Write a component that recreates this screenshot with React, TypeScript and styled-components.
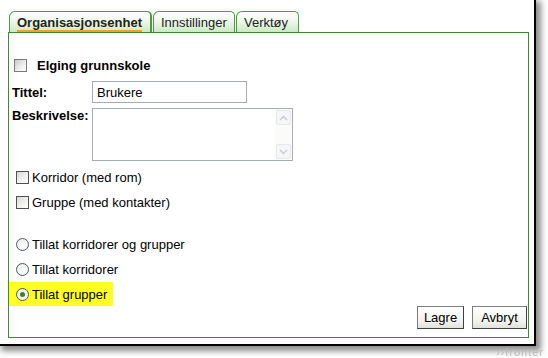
import React from 'react'
import styled, { createGlobalStyle } from 'styled-components'

const GlobalStyle = createGlobalStyle`
  html, body {
    margin: 0;
    padding: 0;
    background: #ffffff;
  }
  body {
    font-family: 'Liberation Sans', Arial, sans-serif;
    font-size: 13px;
    color: #000;
  }
`

const Stage = styled.div`
  position: relative;
  width: 548px;
  height: 358px;
  overflow: hidden;
  background: #fff;
`

const Frame = styled.div`
  width: 536px;
  height: 346px;
  padding: 11px 0 0 8px;
  box-sizing: border-box;
  border-right: 2px solid #000;
  border-bottom: 2px solid #000;
  box-shadow: 3px 3px 6px 2px rgba(0, 0, 0, 0.45);
  background: #fff;
  display: flex;
  flex-direction: column;
`

const TabBar = styled.div`
  display: flex;
  height: 21px;
  padding-left: 1px;
`

const Tab = styled.div<{ $active?: boolean; $w: number }>`
  width: ${(p) => p.$w}px;
  box-sizing: border-box;
  border: 1px solid #4c9a42;
  border-width: ${(p) => (p.$active ? '1px 2px 0 1px' : '1px 1px 0 1px')};
  border-radius: 6px 5px 0 0;
  margin-right: 1px;
  background: linear-gradient(#ffffff 0%, #eef8eb 45%, #cde9c5 100%);
  display: flex;
  align-items: center;
  padding-left: 7px;
  font-size: 13px;
  font-weight: ${(p) => (p.$active ? 'bold' : 'normal')};
  color: #222;
  white-space: nowrap;
  span {
    border-bottom: ${(p) => (p.$active ? '2px solid #f0a136' : 'none')};
    line-height: 15px;
    padding-top: ${(p) => (p.$active ? '2px' : '0')};
  }
`

const Panel = styled.div`
  width: 521px;
  height: 306px;
  box-sizing: border-box;
  border: 1px solid #3d8a36;
  display: flex;
  flex-direction: column;
`

const TitleRow = styled.label`
  display: flex;
  align-items: center;
  height: 20px;
  margin: 22px 0 0 5px;
  gap: 10px;
  font-weight: bold;
  font-size: 13px;
`

const FieldRow = styled.div<{ $top: number }>`
  display: flex;
  align-items: flex-start;
  margin-top: ${(p) => p.$top}px;
  padding-left: 3px;
`

const FieldLabel = styled.div<{ $h: number }>`
  width: 80px;
  font-weight: bold;
  font-size: 13px;
  line-height: 15px;
  display: flex;
  align-items: center;
  height: ${(p) => p.$h}px;
`

const TextInput = styled.div`
  width: 155px;
  height: 22px;
  box-sizing: border-box;
  border: 1px solid #a5acb5;
  display: flex;
  align-items: center;
  padding-left: 4px;
  font-size: 13px;
`

const TextArea = styled.div`
  width: 201px;
  height: 53px;
  box-sizing: border-box;
  border: 1px solid #a5acb5;
  display: flex;
  justify-content: flex-end;
`

const ScrollBar = styled.div`
  width: 17px;
  display: flex;
  flex-direction: column;
  justify-content: space-between;
  background: #fbfbfa;
`

const ScrollBtn = styled.div`
  width: 15px;
  height: 15px;
  margin: 1px;
  border: 1px solid #e6e8ea;
  border-radius: 2px;
  box-sizing: border-box;
  background: #f4f6f8;
  display: flex;
  align-items: center;
  justify-content: center;
`

const OptionGroup = styled.div<{ $top: number }>`
  display: flex;
  flex-direction: column;
  margin-top: ${(p) => p.$top}px;
  gap: 1px;
`

const OptionRow = styled.label<{ $hl?: boolean }>`
  display: flex;
  align-items: center;
  gap: 3px;
  height: 24px;
  width: ${(p) => (p.$hl ? '97px' : 'auto')};
  padding-left: 7px;
  background: ${(p) => (p.$hl ? '#ffff20' : 'transparent')};
  font-size: 13px;
`

const Box = styled.span<{ $big?: boolean }>`
  display: inline-block;
  width: 13px;
  height: 13px;
  box-sizing: border-box;
  border: 1px solid ${(p) => (p.$big ? '#7a7a7a' : '#4e5256')};
  background: ${(p) =>
    p.$big
      ? 'linear-gradient(135deg, #c9c9c9 0%, #ededed 55%, #ffffff 100%)'
      : 'linear-gradient(135deg, #d8d8d4 0%, #f3f3f1 60%, #ffffff 100%)'};
  flex-shrink: 0;
`

const Radio = styled.span<{ $on?: boolean }>`
  width: 13px;
  height: 13px;
  box-sizing: border-box;
  border-radius: 50%;
  border: 1px solid #4d5a66;
  background: radial-gradient(circle at 65% 65%, #ffffff 0%, #e6e6e2 100%);
  display: inline-flex;
  align-items: center;
  justify-content: center;
  flex-shrink: 0;
  &::after {
    content: '';
    display: ${(p) => (p.$on ? 'block' : 'none')};
    width: 5px;
    height: 5px;
    border-radius: 50%;
    background: #3d7d2c;
  }
`

const Footer = styled.div`
  margin-top: auto;
  display: flex;
  justify-content: flex-end;
  gap: 8px;
  padding: 0 1px 8px 0;
`

const Button = styled.button<{ $w: number }>`
  width: ${(p) => p.$w}px;
  height: 23px;
  box-sizing: border-box;
  font-family: 'Liberation Sans', Arial, sans-serif;
  font-size: 13px;
  color: #000;
  border: 1px solid #7d7d7d;
  border-right-color: #404040;
  border-bottom-color: #404040;
  background: linear-gradient(#ffffff, #f1f1ee 70%, #e2e2dc);
  padding: 0;
`

const Watermark = styled.div`
  position: absolute;
  right: 4px;
  bottom: 0px;
  font-size: 11px;
  line-height: 12px;
  letter-spacing: 1px;
  color: #b8b8b8;
  font-family: 'Liberation Sans', Arial, sans-serif;
`

const Chevron = ({ up }: { up?: boolean }) => (
  <svg width="9" height="6" viewBox="0 0 9 6">
    <path
      d={up ? 'M1 5 L4.5 1.5 L8 5' : 'M1 1 L4.5 4.5 L8 1'}
      fill="none"
      stroke="#c8ccd2"
      strokeWidth="1.5"
    />
  </svg>
)

const App = () => {
  return (
    <Stage>
      <GlobalStyle />
      <Frame>
        <TabBar>
          <Tab $active $w={143}>
            <span>Organisasjonsenhet</span>
          </Tab>
          <Tab $w={82}>
            <span>Innstillinger</span>
          </Tab>
          <Tab $w={63}>
            <span>Verktøy</span>
          </Tab>
        </TabBar>
        <Panel>
          <TitleRow>
            <Box $big />
            Elging grunnskole
          </TitleRow>
          <FieldRow $top={6}>
            <FieldLabel $h={22}>Tittel:</FieldLabel>
            <TextInput>Brukere</TextInput>
          </FieldRow>
          <FieldRow $top={5}>
            <FieldLabel $h={15}>Beskrivelse:</FieldLabel>
            <TextArea>
              <ScrollBar>
                <ScrollBtn>
                  <Chevron up />
                </ScrollBtn>
                <ScrollBtn>
                  <Chevron />
                </ScrollBtn>
              </ScrollBar>
            </TextArea>
          </FieldRow>
          <OptionGroup $top={4}>
            <OptionRow>
              <Box />
              Korridor (med rom)
            </OptionRow>
            <OptionRow>
              <Box />
              Gruppe (med kontakter)
            </OptionRow>
          </OptionGroup>
          <OptionGroup $top={18}>
            <OptionRow>
              <Radio />
              Tillat korridorer og grupper
            </OptionRow>
            <OptionRow>
              <Radio />
              Tillat korridorer
            </OptionRow>
            <OptionRow $hl>
              <Radio $on />
              Tillat grupper
            </OptionRow>
          </OptionGroup>
          <Footer>
            <Button $w={47}>Lagre</Button>
            <Button $w={55}>Avbryt</Button>
          </Footer>
        </Panel>
      </Frame>
      <Watermark>››fronter</Watermark>
    </Stage>
  )
}

export default App
